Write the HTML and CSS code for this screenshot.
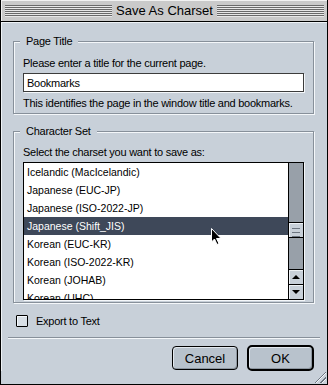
FILE: index.html
```html
<!DOCTYPE html>
<html lang="en">
<head>
    <meta charset="UTF-8">
    <title>Save As Charset</title>
    <link rel="stylesheet" href="styles.css">
</head>
<body>
    <div class="window">
        <div class="titlebar">
            <span class="stripes"></span>
            <span class="title">Save As Charset</span>
            <span class="stripes"></span>
        </div>

        <div class="dialog">
            <fieldset class="group">
                <legend>Page Title</legend>
                <p class="hint">Please enter a title for the current page.</p>
                <input class="text-field" type="text" value="Bookmarks">
                <p class="note">This identifies the page in the window title and bookmarks.</p>
            </fieldset>

            <fieldset class="group charset">
                <legend>Character Set</legend>
                <p class="hint">Select the charset you want to save as:</p>
                <div class="listbox">
                    <ul class="items">
                        <li>Icelandic (MacIcelandic)</li>
                        <li>Japanese (EUC-JP)</li>
                        <li>Japanese (ISO-2022-JP)</li>
                        <li class="selected">Japanese (Shift_JIS)</li>
                        <li>Korean (EUC-KR)</li>
                        <li>Korean (ISO-2022-KR)</li>
                        <li>Korean (JOHAB)</li>
                        <li>Korean (UHC)</li>
                    </ul>
                    <div class="scrollbar">
                        <div class="track">
                            <div class="thumb"></div>
                        </div>
                        <div class="arrow up"></div>
                        <div class="arrow down"></div>
                    </div>
                </div>
            </fieldset>

            <label class="check">
                <span class="box"></span>
                Export to Text
            </label>

            <div class="separator"></div>

            <div class="buttons">
                <button class="btn">Cancel</button>
                <button class="btn default">OK</button>
            </div>
        </div>

        <div class="grip"></div>
        <svg class="cursor" width="12" height="18" viewBox="0 0 12 18"><path d="M0.5 0.5 L0.5 14 L3.5 11 L6 16.5 L8 15.5 L5.5 10.5 L10 10.5 Z" fill="#000" stroke="#fff" stroke-width="1"></path></svg>
    </div>
</body>
</html>
```

FILE: styles.css
```css
body {
    margin: 0;
    font-family: "Liberation Sans", Arial, sans-serif;
    color: #000;
    background-color: #c8d0d9;
}
.window {
    width: 328px;
    height: 385px;
    box-sizing: border-box;
    border-left: 1px solid #000;
    border-right: 1px solid #000;
    border-bottom: 1px solid #000;
    background-color: #c8d0d9;
    position: relative;
    overflow: hidden;
}
.titlebar {
    height: 21px;
    border-bottom: 1px solid #000;
    background-color: #cacaca;
    box-shadow: inset 1px 1px 0 #f2f2f2;
    display: flex;
    align-items: center;
    padding: 0 3px 0 4px;
}
.stripes {
    flex: 1;
    height: 12px;
    background: repeating-linear-gradient(to bottom, #6a6a6a 0, #6a6a6a 1px, #e8e8e8 1px, #e8e8e8 2px);
}
.title {
    font-size: 13px;
    padding: 0 4px;
    line-height: 16px;
}
.dialog {
    padding: 12px 13px 0 12px;
    font-size: 11px;
    letter-spacing: -0.25px;
    box-shadow: inset 1px 1px 0 #eef2f6;
}
.group {
    margin: 0;
    padding: 0 9px 3px 9px;
    border: 1px solid #87909a;
    box-shadow: 1px 1px 0 #f4f7fa, inset 1px 1px 0 #f4f7fa;
}
.group legend {
    font-size: 11px;
    line-height: 14px;
    padding: 0 6px;
    margin-left: -3px;
    background-color: #c8d0d9;
}
.hint {
    margin: 8px 0 3px;
    line-height: 14px;
}
.charset .hint {
    margin-top: 7px;
}
.note {
    margin: 4px 0 0;
    line-height: 14px;
}
.text-field {
    display: block;
    width: 100%;
    height: 19px;
    box-sizing: border-box;
    margin: 0;
    padding: 0 3px;
    border: 1px solid #3c3c3c;
    box-shadow: 1px 1px 0 #f4f7fa;
    font-family: "Liberation Sans", Arial, sans-serif;
    font-size: 11px;
    letter-spacing: -0.25px;
    outline: none;
}
.charset {
    margin-top: 10px;
    padding-bottom: 2px;
}
.listbox {
    height: 138px;
    box-sizing: border-box;
    border: 1px solid #000;
    box-shadow: 1px 1px 0 #f4f7fa;
    background-color: #fff;
    display: flex;
}
.items {
    flex: 1;
    list-style: none;
    margin: 0;
    padding: 0;
    overflow: hidden;
    font-size: 10.5px;
    letter-spacing: 0;
}
.items li {
    height: 18px;
    line-height: 18px;
    padding-left: 3px;
}
.items li.selected {
    background-color: #3e4859;
    color: #fff;
}
.scrollbar {
    width: 14px;
    border-left: 1px solid #000;
    display: flex;
    flex-direction: column;
}
.track {
    flex: 1;
    background-color: #98a0a9;
    padding-top: 59px;
}
.thumb {
    height: 14px;
    border-top: 1px solid #000;
    border-bottom: 1px solid #000;
    background: linear-gradient(#c8d0d9, #c8d0d9) padding-box;
    box-shadow: inset 1px 1px 0 #eef2f6;
    position: relative;
    background-image: repeating-linear-gradient(to bottom, transparent 0, transparent 3px, #6c7580 3px, #6c7580 4px);
    background-size: 8px 13px;
    background-position: 3px 2px;
    background-repeat: no-repeat;
    background-color: #c8d0d9;
}
.arrow {
    height: 14px;
    border-top: 1px solid #000;
    background-color: #c8d0d9;
    box-shadow: inset 1px 1px 0 #eef2f6;
    display: flex;
    align-items: center;
    justify-content: center;
}
.arrow::before {
    content: "";
    border-left: 4px solid transparent;
    border-right: 4px solid transparent;
}
.arrow.up::before {
    border-bottom: 4px solid #000;
}
.arrow.down::before {
    border-top: 4px solid #000;
}
.check {
    display: flex;
    align-items: center;
    gap: 8px;
    margin: 11px 0 0 3px;
    line-height: 14px;
}
.box {
    width: 10px;
    height: 10px;
    border: 1px solid #000;
    border-radius: 1px;
    background-color: #d8dfe6;
    box-shadow: inset 1px 1px 0 #f4f7fa;
}
.separator {
    height: 1px;
    margin: 9px -6px 0 -5px;
    background-color: #87909a;
    border-bottom: 1px solid #f4f7fa;
}
.buttons {
    display: flex;
    justify-content: flex-end;
    gap: 9px;
    margin-top: 7px;
}
.btn {
    height: 24px;
    width: 66px;
    border: 1px solid #000;
    border-radius: 4px;
    background-color: #b8c2cc;
    box-shadow: inset 1px 1px 0 #e2e8ee, inset -1px -1px 0 #8d96a0;
    font-family: "Liberation Sans", Arial, sans-serif;
    font-size: 13px;
    letter-spacing: 0;
    color: #000;
    padding: 0;
}
.btn.default {
    width: 67px;
    height: 26px;
    margin-top: -1px;
    border-width: 2px;
    border-radius: 5px;
}
.grip {
    position: absolute;
    right: 1px;
    bottom: 1px;
    width: 13px;
    height: 13px;
    background: repeating-linear-gradient(135deg, transparent 0, transparent 2px, #6c7580 2px, #6c7580 3px, #f4f7fa 3px, #f4f7fa 4px);
    clip-path: polygon(100% 0, 100% 100%, 0 100%);
}
.cursor {
    position: absolute;
    left: 210px;
    top: 228px;
}
```
